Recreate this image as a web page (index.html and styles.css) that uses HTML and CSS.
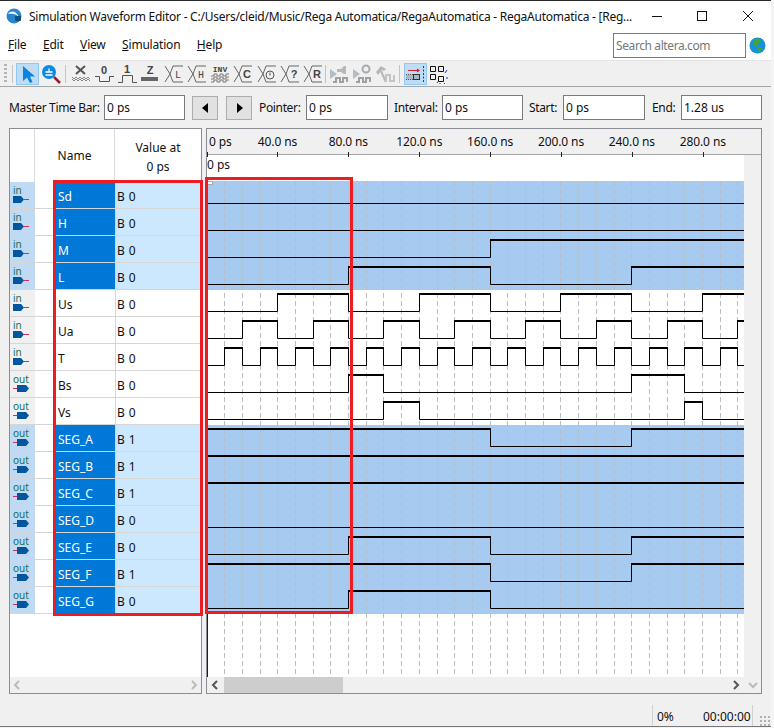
FILE: index.html
```html
<!DOCTYPE html>
<html lang="en">
<head>
<meta charset="utf-8">
<title>Simulation Waveform Editor</title>
<link rel="stylesheet" href="styles.css">
</head>
<body>
<svg class="defs" width="0" height="0" aria-hidden="true">
  <symbol id="pin-in" viewBox="0 0 24 26">
    <text x="3" y="12" class="pin-text">in</text>
    <path d="M3 14H11L14 17.5L11 21H3Z" fill="#00569f"/>
    <path d="M14 17.5H19" stroke="#c8325a" fill="none"/>
  </symbol>
  <symbol id="pin-out" viewBox="0 0 24 26">
    <text x="3" y="12" class="pin-text">out</text>
    <path d="M7 14H16L19 17.5L16 21H7Z" fill="#00569f"/>
    <path d="M3 17.5H7" stroke="#c8325a" fill="none"/>
  </symbol>
  <symbol id="cross" viewBox="0 0 20 20">
    <path d="M1 2L6 10L1 18M9 2L6 10L9 18M9 2H19M9 18H19" fill="none" stroke="#666" stroke-width="1"/>
  </symbol>
</svg>
<div class="window">
  <header class="titlebar">
    <svg class="app-icon" width="16" height="16" viewBox="0 0 16 16"><circle cx="8" cy="8" r="7.5" fill="#2a86c8"/><path d="M2 6C5 2 10 3 13 9C10 6 6 5 2 6Z" fill="#e8f4fb"/><rect x="9" y="8" width="6" height="5" rx="1" fill="#0c4f86"/></svg>
    <span class="title">Simulation Waveform Editor - C:/Users/cleid/Music/Rega Automatica/RegaAutomatica - RegaAutomatica - [Reg...</span>
    <div class="controls">
      <svg width="46" height="30" viewBox="0 0 46 30"><path d="M19 15.5H29" stroke="#111"/></svg>
      <svg width="46" height="30" viewBox="0 0 46 30"><rect x="18.5" y="10.5" width="9" height="9" fill="none" stroke="#111"/></svg>
      <svg width="46" height="30" viewBox="0 0 46 30"><path d="M18 10L28 20M28 10L18 20" stroke="#111" fill="none"/></svg>
    </div>
  </header>
  <nav class="menubar">
    <span class="menu m-file"><u>F</u>ile</span>
    <span class="menu m-edit"><u>E</u>dit</span>
    <span class="menu m-view"><u>V</u>iew</span>
    <span class="menu m-sim"><u>S</u>imulation</span>
    <span class="menu m-help"><u>H</u>elp</span>
    <span class="search">Search altera.com</span>
    <svg class="globe" width="17" height="17" viewBox="0 0 17 17"><circle cx="8.5" cy="8.5" r="8" fill="#1790e0"/><path d="M5 2L10 1.500L12 4L10 7L8 8L8 10L6 9L4 6Z" fill="#3fa535"/><path d="M9 10L12 10L12 13L10 16L9 13Z" fill="#3fa535"/></svg>
  </nav>
  <div class="toolbar">
    <span class="grip"></span>
    <span class="tsep s1"></span>
    <span class="tbtn active">
      <svg width="20" height="20" viewBox="0 0 20 20"><path d="M5 2V17L9 13.500L12 19L14.500 18L12 12.500H17Z" fill="#0a84e0"/></svg>
    </span>
    <span class="tbtn">
      <svg width="20" height="20" viewBox="0 0 20 20"><path d="M13 13L19 19" stroke="#a01c2c" stroke-width="2.500"/><circle cx="8" cy="8" r="7" fill="#0a8ae6"/><path d="M4.500 8H11.500M8 4.500V8M4.500 11H11.500" stroke="#fff" stroke-width="1.300"/></svg>
    </span>
    <span class="tsep s2"></span>
    <span class="tslot"><svg width="20" height="20" viewBox="0 0 20 20"><path d="M5 2L14 10M14 2L5 10" stroke="#555" stroke-width="2"/><path d="M1 13L3 15L5 13L7 15L9 13L11 15L13 13L15 15L17 13L19 15M1 15L3 17L5 15L7 17L9 15L11 17L13 15L15 17L17 15L19 17" fill="none" stroke="#888"/></svg></span>
    <span class="tslot"><svg width="20" height="20" viewBox="0 0 20 20"><text x="10" y="10" class="ti bold">0</text><path d="M1 12.500H5.500V17.500H15.500V12.500H20" fill="none" stroke="#555"/></svg></span>
    <span class="tslot"><svg width="20" height="20" viewBox="0 0 20 20"><text x="10" y="9" class="ti bold">1</text><path d="M1 18.500H5.500V11.500H15.500V18.500H20" fill="none" stroke="#555"/></svg></span>
    <span class="tslot"><svg width="20" height="20" viewBox="0 0 20 20"><text x="10" y="10" class="ti bold">Z</text><rect x="1" y="13" width="17" height="4" fill="#666"/></svg></span>
    <span class="tslot"><svg width="20" height="20" viewBox="0 0 20 20"><use href="#cross"/><text x="14" y="14" class="ti">L</text></svg></span>
    <span class="tslot"><svg width="20" height="20" viewBox="0 0 20 20"><use href="#cross"/><text x="14" y="14" class="ti">H</text></svg></span>
    <span class="tslot"><svg width="20" height="20" viewBox="0 0 20 20"><text x="10" y="8" class="ti small">INV</text><path d="M1 12H4V10H7V12H10V10H13V12H16V10H19M1 15H4V13H7V15H10V13H13V15H16V13H19M1 18H4V16H7V18H10V16H13V18H16V16H19" fill="none" stroke="#777"/></svg></span>
    <span class="tslot"><svg width="20" height="20" viewBox="0 0 20 20"><use href="#cross"/><text x="14" y="14" class="ti bold">C</text></svg></span>
    <span class="tslot"><svg width="20" height="20" viewBox="0 0 20 20"><use href="#cross"/><circle cx="13" cy="11" r="4" fill="none" stroke="#555"/><path d="M13 8.500V11.500" stroke="#555"/></svg></span>
    <span class="tslot"><svg width="20" height="20" viewBox="0 0 20 20"><use href="#cross"/><text x="14" y="14" class="ti bold">?</text></svg></span>
    <span class="tslot"><svg width="20" height="20" viewBox="0 0 20 20"><use href="#cross"/><text x="14" y="14" class="ti bold">R</text></svg></span>
    <span class="tsep s3"></span>
    <span class="tslot dim"><svg width="20" height="20" viewBox="0 0 20 20"><path d="M1 5L8 10L1 15Z" fill="#b4bcc4"/><path d="M8 5H12L15 2H17V10H15L12 8H8Z" fill="#b8b8b8"/><path d="M4 18H7V14H11V18H14V14H18V18" fill="none" stroke="#a0a0a0" stroke-width="2"/></svg></span>
    <span class="tslot dim"><svg width="20" height="20" viewBox="0 0 20 20"><path d="M1 5L8 10L1 15Z" fill="#b4bcc4"/><circle cx="14" cy="5" r="3.500" fill="none" stroke="#aaa" stroke-width="2"/><path d="M4 18H7V14H11V18H14V14H18V18" fill="none" stroke="#a0a0a0" stroke-width="2"/></svg></span>
    <span class="tslot dim"><svg width="20" height="20" viewBox="0 0 20 20"><path d="M1 8L6 2L11 5L9 7L7 6L3 11Z" fill="#b8b8b8"/><path d="M6 7L10 16" stroke="#b8b8b8" stroke-width="2"/><path d="M9 17H11V11H15V17H19V11" fill="none" stroke="#c4c4c4" stroke-width="2"/></svg></span>
    <span class="tsep s4"></span>
    <span class="tbtn active a2">
      <svg width="20" height="20" viewBox="0 0 20 20"><path d="M3 6.500H13" stroke="#d01c24"/><path d="M12 4.500L15 6.500L12 8.500Z" fill="#d01c24"/><path d="M1 10.500H15V15.500H1Z" fill="#a8b8c8"/><rect x="8.500" y="10.500" width="6" height="5" fill="none" stroke="#333"/><path d="M1 10.500H8M1 15.500H8" stroke="#555" stroke-dasharray="1 1"/><path d="M18.500 2V19" stroke="#1034d8" stroke-dasharray="2 1.500"/></svg>
    </span>
    <span class="tslot"><svg width="20" height="20" viewBox="0 0 20 20"><path d="M2.500 2.500H7.500V7.500H2.500ZM10.500 2.500H15.500V7.500H10.500ZM2.500 10.500H7.500V15.500H2.500ZM10.500 12.500H15.500V17.500H10.500Z" fill="none" stroke="#111"/><path d="M17 9L19 6M18 14H20M9 19L10 17.500M16 19L17 20M12 20V19" stroke="#1034d8" fill="none"/></svg></span>
  </div>
  <div class="timebar">
    <span class="tlabel l-master">Master Time Bar:</span>
    <span class="field f-master">0 ps</span>
    <button class="nav n-prev" aria-label="Previous"><svg width="7" height="10" viewBox="0 0 7 10"><path d="M6 0V10L0 5Z" fill="#000"/></svg></button>
    <button class="nav n-next" aria-label="Next"><svg width="7" height="10" viewBox="0 0 7 10"><path d="M1 0V10L7 5Z" fill="#000"/></svg></button>
    <span class="tlabel l-pointer">Pointer:</span>
    <span class="field f-pointer">0 ps</span>
    <span class="tlabel l-interval">Interval:</span>
    <span class="field f-interval">0 ps</span>
    <span class="tlabel l-start">Start:</span>
    <span class="field f-start">0 ps</span>
    <span class="tlabel l-end">End:</span>
    <span class="field f-end">1.28 us</span>
  </div>
  <main class="workspace">
    <section class="signals">
      <div class="sig-head">
        <div class="h-icon"></div>
        <div class="h-name">Name</div>
        <div class="h-value"><span>Value at</span><span>0 ps</span></div>
      </div>
      <div class="row sel"><span class="r-icon"><svg width="24" height="26"><use href="#pin-in"/></svg></span><span class="r-pad"></span><span class="r-name">Sd</span><span class="r-value">B 0</span></div>
      <div class="row sel"><span class="r-icon"><svg width="24" height="26"><use href="#pin-in"/></svg></span><span class="r-pad"></span><span class="r-name">H</span><span class="r-value">B 0</span></div>
      <div class="row sel"><span class="r-icon"><svg width="24" height="26"><use href="#pin-in"/></svg></span><span class="r-pad"></span><span class="r-name">M</span><span class="r-value">B 0</span></div>
      <div class="row sel"><span class="r-icon"><svg width="24" height="26"><use href="#pin-in"/></svg></span><span class="r-pad"></span><span class="r-name">L</span><span class="r-value">B 0</span></div>
      <div class="row"><span class="r-icon"><svg width="24" height="26"><use href="#pin-in"/></svg></span><span class="r-pad"></span><span class="r-name">Us</span><span class="r-value">B 0</span></div>
      <div class="row"><span class="r-icon"><svg width="24" height="26"><use href="#pin-in"/></svg></span><span class="r-pad"></span><span class="r-name">Ua</span><span class="r-value">B 0</span></div>
      <div class="row"><span class="r-icon"><svg width="24" height="26"><use href="#pin-in"/></svg></span><span class="r-pad"></span><span class="r-name">T</span><span class="r-value">B 0</span></div>
      <div class="row"><span class="r-icon"><svg width="24" height="26"><use href="#pin-out"/></svg></span><span class="r-pad"></span><span class="r-name">Bs</span><span class="r-value">B 0</span></div>
      <div class="row"><span class="r-icon"><svg width="24" height="26"><use href="#pin-out"/></svg></span><span class="r-pad"></span><span class="r-name">Vs</span><span class="r-value">B 0</span></div>
      <div class="row sel"><span class="r-icon"><svg width="24" height="26"><use href="#pin-out"/></svg></span><span class="r-pad"></span><span class="r-name">SEG_A</span><span class="r-value">B 1</span></div>
      <div class="row sel"><span class="r-icon"><svg width="24" height="26"><use href="#pin-out"/></svg></span><span class="r-pad"></span><span class="r-name">SEG_B</span><span class="r-value">B 1</span></div>
      <div class="row sel"><span class="r-icon"><svg width="24" height="26"><use href="#pin-out"/></svg></span><span class="r-pad"></span><span class="r-name">SEG_C</span><span class="r-value">B 1</span></div>
      <div class="row sel"><span class="r-icon"><svg width="24" height="26"><use href="#pin-out"/></svg></span><span class="r-pad"></span><span class="r-name">SEG_D</span><span class="r-value">B 0</span></div>
      <div class="row sel"><span class="r-icon"><svg width="24" height="26"><use href="#pin-out"/></svg></span><span class="r-pad"></span><span class="r-name">SEG_E</span><span class="r-value">B 0</span></div>
      <div class="row sel"><span class="r-icon"><svg width="24" height="26"><use href="#pin-out"/></svg></span><span class="r-pad"></span><span class="r-name">SEG_F</span><span class="r-value">B 1</span></div>
      <div class="row sel"><span class="r-icon"><svg width="24" height="26"><use href="#pin-out"/></svg></span><span class="r-pad"></span><span class="r-name">SEG_G</span><span class="r-value">B 0</span></div>
      <div class="sig-fill"></div>
      <div class="hscroll">
        <svg width="8" height="10" viewBox="0 0 8 10"><path d="M6 1L2 5L6 9" fill="none" stroke="#bbb" stroke-width="2"/></svg>
        <svg width="8" height="10" viewBox="0 0 8 10"><path d="M2 1L6 5L2 9" fill="none" stroke="#bbb" stroke-width="2"/></svg>
      </div>
    </section>
    <section class="waves">
      <div class="ruler">
        <span class="mark first">0 ps</span>
        <span class="mark">40.0 ns</span>
        <span class="mark">80.0 ns</span>
        <span class="mark">120.0 ns</span>
        <span class="mark">160.0 ns</span>
        <span class="mark">200.0 ns</span>
        <span class="mark">240.0 ns</span>
        <span class="mark">280.0 ns</span>
      </div>
      <div class="wave-body">
        <div class="wave-col">
          <div class="bar-row">0 ps</div>
          <svg class="plot" width="537" height="496" viewBox="207 181 537 496">
            <rect class="band" x="207" y="181" width="537" height="109"/>
            <rect class="band" x="207" y="425" width="537" height="189"/>
            <path class="grid" d="M224.500 181V677M242.500 181V677M260.500 181V677M277.500 181V677M295.500 181V677M313.500 181V677M330.500 181V677M348.500 181V677M366.500 181V677M383.500 181V677M401.500 181V677M419.500 181V677M437.500 181V677M454.500 181V677M472.500 181V677M490.500 181V677M507.500 181V677M525.500 181V677M543.500 181V677M560.500 181V677M578.500 181V677M596.500 181V677M614.500 181V677M631.500 181V677M649.500 181V677M667.500 181V677M684.500 181V677M702.500 181V677M720.500 181V677M737.500 181V677"/>
            <path class="master" d="M207.500 181V677"/>
            <rect class="handle" x="207.500" y="181.500" width="5" height="3"/>
            <g class="thin">
              <path d="M207 203.500H744"/>
              <path d="M207 230.500H744"/>
              <path d="M207 257.500H490.500V240"/>
              <path d="M207 284.500H348.500V267M490.500 267V284.500H631.500V267"/>
              <path d="M207 311.500H277.500V294M348.500 294V311.500H419.500V294M490.500 294V311.500H560.500V294M631.500 294V311.500H702.500V294"/>
              <path d="M207 338.500H242.500V321M277.500 321V338.500H313.500V321M348.500 321V338.500H383.500V321M419.500 321V338.500H454.500V321M490.500 321V338.500H525.500V321M560.500 321V338.500H596.500V321M631.500 321V338.500H667.500V321M702.500 321V338.500H737.500V321"/>
              <path d="M207 365.500H224.500V348M242.500 348V365.500H260.500V348M277.500 348V365.500H295.500V348M313.500 348V365.500H330.500V348M348.500 348V365.500H366.500V348M383.500 348V365.500H401.500V348M419.500 348V365.500H437.500V348M454.500 348V365.500H472.500V348M490.500 348V365.500H507.500V348M525.500 348V365.500H543.500V348M560.500 348V365.500H578.500V348M596.500 348V365.500H614.500V348M631.500 348V365.500H649.500V348M667.500 348V365.500H684.500V348M702.500 348V365.500H720.500V348M737.500 348V365.500H744"/>
              <path d="M207 392.500H348.500V375M383.500 375V392.500H631.500V375M684.500 375V392.500H744"/>
              <path d="M207 419.500H383.500V402M419.500 402V419.500H684.500V402M702.500 402V419.500H744"/>
              <path d="M490.500 429V446.500H631.500V429"/>
              <path d="M207 527.500H744"/>
              <path d="M207 554.500H348.500V537M490.500 537V554.500H631.500V537"/>
              <path d="M490.500 564V581.500H631.500V564"/>
              <path d="M207 608.500H348.500V591M490.500 591V608.500H744"/>
            </g>
            <g class="thick">
              <path d="M490 240H744"/>
              <path d="M348 267H491M631 267H744"/>
              <path d="M277 294H349M419 294H491M560 294H632M702 294H744"/>
              <path d="M242 321H278M313 321H349M383 321H420M454 321H491M525 321H561M596 321H632M667 321H703M737 321H744"/>
              <path d="M224 348H243M260 348H278M295 348H314M330 348H349M366 348H384M401 348H420M437 348H455M472 348H491M507 348H526M543 348H561M578 348H597M614 348H632M649 348H668M684 348H703M720 348H738"/>
              <path d="M348 375H384M631 375H685"/>
              <path d="M383 402H420M684 402H703"/>
              <path d="M207 429H491M631 429H744"/>
              <path d="M207 456H744"/>
              <path d="M207 483H744"/>
              <path d="M348 537H491M631 537H744"/>
              <path d="M207 564H491M631 564H744"/>
              <path d="M348 591H491"/>
            </g>
          </svg>
          <div class="hscroll wave-scroll">
            <svg width="8" height="10" viewBox="0 0 8 10"><path d="M6 1L2 5L6 9" fill="none" stroke="#555" stroke-width="2"/></svg>
            <span class="thumb"></span>
            <svg width="8" height="10" viewBox="0 0 8 10"><path d="M2 1L6 5L2 9" fill="none" stroke="#555" stroke-width="2"/></svg>
          </div>
        </div>
        <div class="vscroll">
          <svg width="10" height="8" viewBox="0 0 10 8"><path d="M1 2L5 6L9 2" fill="none" stroke="#bbb" stroke-width="2"/></svg>
        </div>
      </div>
    </section>
  </main>
  <footer class="status">
    <span class="stat pct">0%</span>
    <span class="stat time">00:00:00</span>
    <span class="size-grip"></span>
  </footer>
</div>
<div class="callout box-a"></div>
<div class="callout box-b"></div>
</body>
</html>
```
FILE: styles.css
```css
* { box-sizing: border-box; }
html, body { margin: 0; padding: 0; }
body {
  width: 774px;
  height: 728px;
  overflow: hidden;
  position: relative;
  background: #f4f4f4;
  font-family: "Noto Sans", "Open Sans", sans-serif;
  font-size: 12px;
  color: #111;
}
.defs { display: none; }
.pin-text { font: 10px "Noto Sans", sans-serif; fill: #14705c; }

.window {
  width: 771px;
  height: 727px;
  border-top: 1px solid #2b2b2b;
  border-bottom: 1px solid #777;
  background: #f0f0f0;
  display: flex;
  flex-direction: column;
}

.titlebar {
  height: 30px;
  flex: none;
  background: #fff;
  display: flex;
  align-items: center;
  padding-left: 6px;
}
.app-icon { margin-right: 7px; flex: none; }
.title { white-space: nowrap; flex: 1; min-width: 0; letter-spacing: -0.25px; }
.controls { display: flex; flex: none; }
.controls svg { display: block; width: 46px; }

.menubar {
  height: 30px;
  flex: none;
  background: #fff;
  border-bottom: 1px solid #e4e4e4;
  display: flex;
  align-items: center;
  padding-left: 8px;
}
.menu { white-space: nowrap; letter-spacing: -0.2px; margin-top: -3px; }
.m-edit, .m-view, .m-sim, .m-help { margin-left: 16.5px; }
.search {
  margin-left: auto;
  margin-right: 3px;
  width: 133px;
  height: 25px;
  border: 1px solid #7a7a7a;
  color: #777;
  padding: 4px 2px 0;
  line-height: 15px;
  white-space: nowrap;
  letter-spacing: -0.4px;
}
.globe { margin-right: 5px; flex: none; }

.toolbar {
  height: 26px;
  flex: none;
  display: flex;
  align-items: center;
  padding-left: 4px;
  border-bottom: 1px solid #a6a6a6;
  background: #f0f0f0;
}
.grip {
  width: 3px;
  height: 20px;
  background: repeating-linear-gradient(to bottom, #b4b4b4 0 2px, transparent 2px 4px);
}
.tsep { width: 1px; height: 18px; background: #c4c4c4; flex: none; }
.s1 { margin-left: 5px; margin-right: 3px; }
.s2 { margin-left: 3px; margin-right: 3px; }
.s3 { margin-right: 1px; }
.s4 { margin-left: 2px; margin-right: 4px; }
.tslot { width: 23.27px; height: 22px; flex: none; display: flex; align-items: center; justify-content: center; }
.tbtn { width: 23px; height: 22px; flex: none; display: flex; align-items: center; justify-content: center; }
.tbtn.active { background: #bfdcf5; border: 1px solid #90c8f6; }
.tslot svg, .tbtn svg { display: block; overflow: visible; }
.ti { font: 10px "Liberation Mono", monospace; fill: #444; text-anchor: middle; }
.ti.bold { font-weight: 700; font-size: 11px; font-family: "Liberation Sans", sans-serif; }
.ti.small { font-size: 8px; font-weight: 700; }

.timebar {
  height: 41px;
  flex: none;
  display: flex;
  align-items: center;
  padding-left: 9px;
}
.tlabel { white-space: nowrap; letter-spacing: -0.35px; }
.field {
  height: 25px;
  background: #fff;
  border: 1px solid #7a7a7a;
  padding: 4px 2px 0;
  line-height: 16px;
  white-space: nowrap;
  flex: none;
}
.l-master { width: 95px; }
.f-master { width: 81px; }
.nav {
  width: 26px;
  height: 24px;
  padding: 0;
  background: #e1e1e1;
  border: 1px solid #adadad;
  display: flex;
  align-items: center;
  justify-content: center;
}
.n-prev { margin-left: 7px; }
.n-next { margin-left: 8px; }
.l-pointer { margin-left: 7px; width: 47px; }
.f-pointer { width: 82px; }
.l-interval { margin-left: 6px; width: 48px; }
.f-interval { width: 81px; }
.l-start { margin-left: 6px; width: 34px; }
.f-start { width: 82px; }
.l-end { margin-left: 7px; width: 29px; }
.f-end { width: 81px; }

.workspace {
  height: 566px;
  flex: none;
  display: flex;
  padding-left: 9px;
}
.signals {
  width: 193px;
  height: 566px;
  border: 1px solid #8a8d94;
  background: #fff;
  display: flex;
  flex-direction: column;
  flex: none;
}
.sig-head { height: 53px; flex: none; display: flex; }
.h-icon { width: 25px; border-right: 1px solid #dcdcdc; }
.h-name {
  width: 80px;
  border-right: 1px solid #dcdcdc;
  display: flex;
  align-items: center;
  justify-content: center;
}
.h-value {
  flex: 1;
  display: flex;
  flex-direction: column;
  align-items: center;
  justify-content: center;
  gap: 3px;
  padding-top: 3px;
  line-height: 16px;
}
.row {
  height: 27px;
  flex: none;
  display: flex;
  border-bottom: 1px solid #d6d6d6;
  background: #fff;
}
.r-icon { width: 25px; flex: none; background: #f0f0f0; }
.r-icon svg { display: block; }
.r-pad { width: 20px; flex: none; }
.r-name { width: 60px; flex: none; padding: 5px 0 0 3px; line-height: 20px; white-space: nowrap; }
.r-value { flex: 1; border-left: 1px solid #d6d6d6; padding: 5px 0 0 1px; line-height: 20px; letter-spacing: 0.4px; }
.row.sel .r-icon { background: #bfdaf2; }
.row.sel .r-name { background: #0078d7; color: #fff; }
.row.sel .r-value { background: #cce8ff; }
.sig-fill { flex: 1; }

.hscroll {
  height: 16px;
  flex: none;
  background: #f0f0f0;
  display: flex;
  align-items: center;
  justify-content: space-between;
  padding: 0 3px;
}
.waves {
  margin-left: 4px;
  width: 556px;
  height: 566px;
  border: 1px solid #8a8d94;
  display: flex;
  flex-direction: column;
  flex: none;
}
.ruler {
  height: 26px;
  flex: none;
  background: #f0f0f0;
  border-bottom: 1px solid #a6a6a6;
  display: grid;
  grid-template-columns: 35px repeat(7, 70.9px);
}
.mark {
  position: relative;
  text-align: center;
  white-space: nowrap;
  line-height: 26px;
  padding-bottom: 2px;
  letter-spacing: -0.1px;
}
.mark::after {
  content: "";
  position: absolute;
  left: 50%;
  bottom: 0;
  width: 1px;
  height: 5px;
  background: #222;
}
.mark.first { text-align: left; padding-left: 2px; }
.mark.first::after { left: 0; }
.wave-body { flex: 1; display: flex; min-height: 0; }
.wave-col { width: 537px; flex: none; display: flex; flex-direction: column; }
.bar-row {
  height: 26px;
  flex: none;
  background: #fff;
  line-height: 19px;
}
.plot { display: block; flex: none; background: #fff; }
.band { fill: #a6caf0; }
.grid { stroke: #bdbdbd; stroke-dasharray: 5 3; fill: none; }
.master { stroke: #0010c0; stroke-width: 1; fill: none; }
.handle { fill: #fff; stroke: #aaa; }
.thin path { fill: none; stroke: #000; stroke-width: 1; }
.thick path { fill: none; stroke: #000; stroke-width: 2; }
.wave-scroll { padding: 0 4px; position: relative; }
.thumb {
  position: absolute;
  left: 17px;
  top: 0;
  width: 119px;
  height: 16px;
  background: #cdcdcd;
}
.vscroll {
  flex: 1;
  display: flex;
  align-items: flex-end;
  justify-content: center;
  padding-bottom: 4px;
  background: #f0f0f0;
}
.status {
  flex: 1;
  position: relative;
  display: flex;
  align-items: flex-end;
  justify-content: flex-end;
}
.stat {
  height: 21px;
  line-height: 24px;
  white-space: nowrap;
  border-left: 1px solid #d0d0d0;
  padding-left: 4px;
}
.pct { width: 51px; }
.time { border-left: none; padding-left: 0; margin-right: 18px; border-right: 1px solid #d0d0d0; width: 50px; }
.size-grip {
  position: absolute;
  right: 1px;
  bottom: 0;
  width: 10px;
  height: 10px;
  background: radial-gradient(circle at 1px 1px, #b0b0b0 1px, transparent 1.2px) 0 0 / 4px 4px;
}

.callout { position: absolute; border: 3px solid #ed1c24; pointer-events: none; }
.box-a { left: 53px; top: 180px; width: 150px; height: 436px; }
.box-b { left: 205px; top: 177px; width: 148px; height: 437px; }
```
